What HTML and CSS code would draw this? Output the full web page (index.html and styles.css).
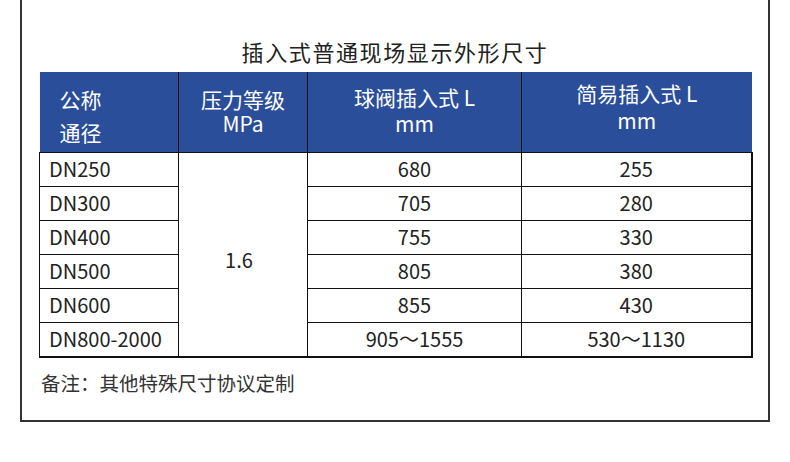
FILE: index.html
```html
<!DOCTYPE html>
<html lang="zh">
<head>
<meta charset="utf-8">
<link rel="stylesheet" href="styles.css">
</head>
<body>
<div class="frame">
  <h1 class="title">插入式普通现场显示外形尺寸</h1>
  <table class="spec">
    <colgroup>
      <col class="c1"><col class="c2"><col class="c3"><col class="c4">
    </colgroup>
    <thead>
      <tr>
        <th class="h1">公称<br>通径</th>
        <th class="h2">压力等级<br>MPa</th>
        <th class="h3">球阀插入式 L<br>mm</th>
        <th class="h4">简易插入式 L<br>mm</th>
      </tr>
    </thead>
    <tbody>
      <tr><td class="dn">DN250</td><td class="pn" rowspan="6">1.6</td><td>680</td><td class="last">255</td></tr>
      <tr><td class="dn">DN300</td><td>705</td><td class="last">280</td></tr>
      <tr><td class="dn">DN400</td><td>755</td><td class="last">330</td></tr>
      <tr><td class="dn">DN500</td><td>805</td><td class="last">380</td></tr>
      <tr><td class="dn">DN600</td><td>855</td><td class="last">430</td></tr>
      <tr class="bottom"><td class="dn">DN800-2000</td><td>905～1555</td><td class="last">530～1130</td></tr>
    </tbody>
  </table>
  <p class="note">备注：其他特殊尺寸协议定制</p>
</div>
</body>
</html>
```

FILE: styles.css
```css
html, body {
  margin: 0;
  padding: 0;
  background: #ffffff;
}
body {
  font-family: "Noto Sans CJK SC", "Noto Sans", sans-serif;
  color: #222;
}
.frame {
  margin-left: 20px;
  width: 746px;
  height: 420px;
  border: 2px solid #333;
  border-top: none;
}
.title {
  margin: 0;
  padding-top: 36px;
  height: 36px;
  font-size: 22px;
  font-weight: 400;
  line-height: 30px;
  letter-spacing: 1.6px;
  text-align: center;
  color: #222;
}
.spec {
  margin-left: 17px;
  width: 712px;
  table-layout: fixed;
  border-collapse: collapse;
  font-size: 20px;
}
.c1 { width: 139px; }
.c2 { width: 129px; }
.c3 { width: 214px; }
.c4 { width: 230px; }
.spec th {
  background: #2a4e99;
  color: #fff;
  font-weight: 400;
  font-size: 21px;
  height: 80px;
  padding: 0;
  box-sizing: border-box;
  vertical-align: top;
  text-align: center;
  border-left: 1px solid #111;
}
.spec th.h1 {
  border-left: none;
  text-align: left;
  padding-left: 20px;
  line-height: 33px;
  padding-top: 11px;
}
.spec th.h2 { line-height: 24px; padding-top: 15px; }
.spec th.h3 { line-height: 26px; padding-top: 12px; }
.spec th.h4 { line-height: 27px; padding-top: 8px; }
.spec td {
  height: 33px;
  padding: 0;
  border: 1px solid #111;
  text-align: center;
  vertical-align: middle;
  line-height: 26px;
  color: #222;
}
.spec td.last { border-right-width: 2px; }
.spec tr.bottom td, .spec td.pn { border-bottom-width: 2px; }
.spec td.dn {
  text-align: left;
  padding-left: 9px;
}
.spec td.pn { padding-top: 12px; padding-right: 8px; }
.note {
  margin: 11px 0 0 19px;
  font-size: 19.5px;
  line-height: 28px;
  color: #333;
}
```
